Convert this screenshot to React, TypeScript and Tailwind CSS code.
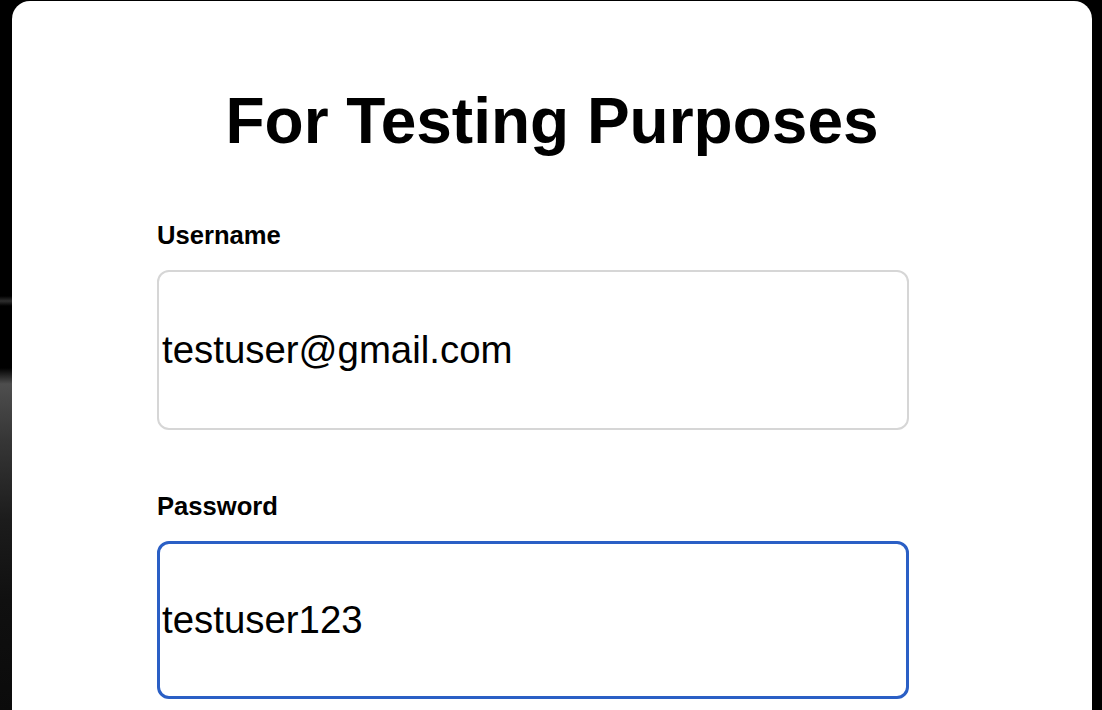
export default function App() {
  return (
    <div className="flex h-[710px] w-[1102px] overflow-hidden bg-black font-['Liberation_Sans',Arial,sans-serif] text-black">
      <div className="relative h-[710px] w-[12px] shrink-0 bg-[linear-gradient(to_bottom,#000_0px,#000_368px,#4e4e4e_384px,#363636_440px,#1c1c1c_520px,#101010_600px,#0b0b0b_710px)]">
        <div className="absolute left-0 top-[296px] h-[10px] w-[12px] bg-[linear-gradient(to_bottom,transparent,#2e2e2e,transparent)]" />
      </div>
      <div className="mt-[1px] h-[800px] w-[1080px] shrink-0 rounded-[18px] bg-white pt-[84px]">
        <h1 className="h-[72px] text-center text-[64px] font-bold leading-[72px]">For Testing Purposes</h1>
        <div className="ml-[145px] mt-[62px] w-[752px]">
          <label className="block h-[30px] pt-[1px] text-[25.6px] font-bold leading-[30px]">Username</label>
          <input
            type="text"
            readOnly
            defaultValue="testuser@gmail.com"
            className="mt-[21px] box-border block h-[160px] w-[752px] rounded-[12px] border-2 border-[#d6d6d6] bg-white px-[3px] text-[38.4px] leading-normal text-black outline-none"
          />
          <label className="mt-[60px] block h-[30px] pt-[1px] text-[25.6px] font-bold leading-[30px]">Password</label>
          <input
            type="text"
            readOnly
            defaultValue="testuser123"
            className="mt-[21px] box-border block h-[158px] w-[752px] rounded-[12px] border-[3px] border-[#2a5fc5] bg-white px-[2px] text-[38.4px] leading-normal text-black outline-none"
          />
        </div>
      </div>
    </div>
  );
}
